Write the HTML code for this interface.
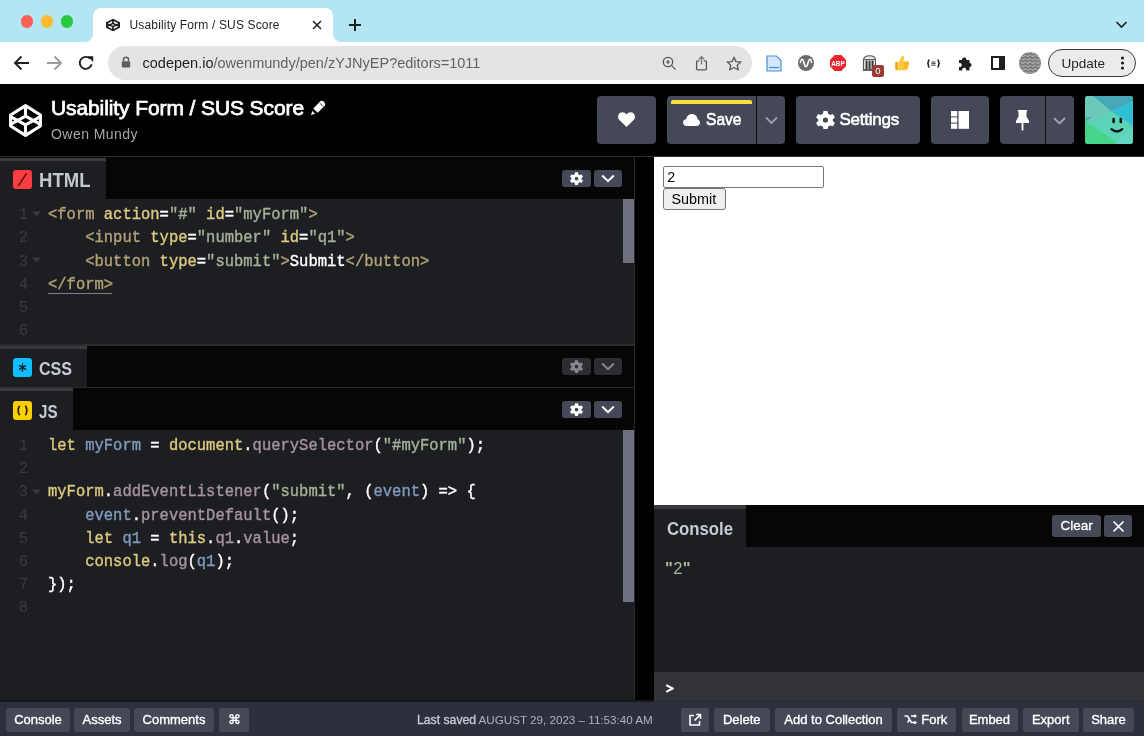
<!DOCTYPE html>
<html><head><meta charset="utf-8">
<style>
*{box-sizing:border-box;margin:0;padding:0}
html,body{width:1144px;height:736px;overflow:hidden;background:#000;font-family:"Liberation Sans",sans-serif}
div,svg,span.a{position:absolute}
span{position:static}
.btn{background:#444857;border-radius:4px}
.code{font-family:"Liberation Mono",monospace;font-size:17.4px;white-space:pre;color:#fff;line-height:23px;transform:scaleX(0.891);transform-origin:0 0;-webkit-text-stroke:0.4px currentColor}
.ln{color:#383a40;font-family:"Liberation Mono",monospace;font-size:17.4px;line-height:23px;text-align:right;width:31.6px;left:0;transform:scaleX(0.891);transform-origin:0 0}
.tg{color:#b3a276}.at{color:#ddca7e}.st{color:#a3b398}.df{color:#809bbd}.pr{color:#a8939f}.kw{color:#ddca7e}
.fbtn{background:#444857;border-radius:3px;color:#fff;font-size:13px;height:24px;top:708px;line-height:24px;text-align:center;-webkit-text-stroke:0.35px #fff}
</style></head><body><div id="root" style="left:0;top:0;width:1144px;height:736px;overflow:hidden;will-change:transform;background:#000">
<!-- ========== chrome tab bar ========== -->
<div id="tabbar" style="left:0;top:0;width:1144px;height:42px;background:#b3e6f2"></div>
<div style="left:20.5px;top:15px;width:12.5px;height:12.5px;border-radius:50%;background:#fe5f57"></div>
<div style="left:40.5px;top:15px;width:12.5px;height:12.5px;border-radius:50%;background:#febc2e"></div>
<div style="left:60.5px;top:15px;width:12.5px;height:12.5px;border-radius:50%;background:#28c840"></div>
<div style="left:93px;top:8px;width:240px;height:34px;background:#fff;border-radius:8px 8px 0 0"></div>
<div style="left:85px;top:34px;width:8px;height:8px;background:radial-gradient(circle at 0 0,#b3e6f2 7.5px,#fff 8.2px)"></div>
<div style="left:333px;top:34px;width:8px;height:8px;background:radial-gradient(circle at 100% 0,#b3e6f2 7.5px,#fff 8.2px)"></div>
<svg style="left:106px;top:19px" width="14" height="12" viewBox="0 0 33 33" preserveAspectRatio="none"><g fill="none" stroke="#1f1f1f" stroke-width="4.2" stroke-linejoin="round"><path d="M16.5 1.6L31.4 11V22L16.5 31.4L1.6 22V11Z"/><path d="M16.5 1.6V12.2L1.6 20.4M16.5 12.2L31.4 20.4M16.5 31.4V20.8L1.6 12.6M16.5 20.8L31.4 12.6"/></g></svg>
<div id="tabtitle" style="left:129.5px;top:18px;font-size:12px;color:#1f1f1f;letter-spacing:0.16px">Usability Form / SUS Score</div>
<svg style="left:312px;top:20px" width="10" height="10" viewBox="0 0 10 10"><path d="M1 1L9 9M9 1L1 9" stroke="#1f1f1f" stroke-width="1.5"/></svg>
<svg style="left:348px;top:18px" width="14" height="14" viewBox="0 0 14 14"><path d="M7 1V13M1 7H13" stroke="#1f1f1f" stroke-width="2"/></svg>
<svg style="left:1115px;top:20px" width="13" height="9" viewBox="0 0 13 9"><path d="M1.5 2L6.5 7L11.5 2" fill="none" stroke="#1f1f1f" stroke-width="1.6"/></svg>
<!-- ========== toolbar ========== -->
<div id="toolbar" style="left:0;top:42px;width:1144px;height:42px;background:#fff"></div>
<svg style="left:13px;top:55px" width="17" height="16" viewBox="0 0 17 16"><path d="M16 8H2.5M8.5 1.5L2 8L8.5 14.5" fill="none" stroke="#1f1f1f" stroke-width="1.9"/></svg>
<svg style="left:46px;top:55px" width="17" height="16" viewBox="0 0 17 16"><path d="M1 8H14.5M8.5 1.5L15 8L8.5 14.5" fill="none" stroke="#9a9a9a" stroke-width="1.9"/></svg>
<svg style="left:78px;top:55px" width="17" height="16" viewBox="0 0 17 16"><path d="M13.6 9.2A6 6 0 1 1 12 3.6" fill="none" stroke="#1f1f1f" stroke-width="1.9"/><path d="M9.5 1.2H15.2V6.9Z" fill="#1f1f1f"/></svg>
<div style="left:108px;top:46px;width:644px;height:34px;border-radius:17px;background:#e4e4e4"></div>
<svg style="left:121px;top:56px" width="10" height="12" viewBox="0 0 10 12"><path d="M2.5 5.5V3.8A2.5 2.5 0 0 1 7.5 3.8V5.5" fill="none" stroke="#5f5f5f" stroke-width="1.5"/><rect x="0.8" y="5.2" width="8.4" height="6.3" rx="1" fill="#5f5f5f"/></svg>
<div id="url" style="left:142.5px;top:55px;font-size:14.5px;color:#1f1f1f">codepen.io<span style="color:#5f6368">/owenmundy/pen/zYJNyEP?editors=1011</span></div>
<svg style="left:662px;top:56px" width="15" height="15" viewBox="0 0 15 15"><circle cx="6" cy="6" r="4.7" fill="none" stroke="#555" stroke-width="1.3"/><path d="M6 4V8M4 6H8M9.4 9.4L13.6 13.6" stroke="#555" stroke-width="1.2"/></svg>
<svg style="left:695px;top:55px" width="13" height="16" viewBox="0 0 13 16"><path d="M4.2 5.8H2.6Q1.6 5.8 1.6 6.8V13.8Q1.6 14.8 2.6 14.8H10.4Q11.4 14.8 11.4 13.8V6.8Q11.4 5.8 10.4 5.8H8.8" fill="none" stroke="#555" stroke-width="1.3"/><path d="M6.5 9.5V1.8M4 4.2L6.5 1.6L9 4.2" fill="none" stroke="#777" stroke-width="1.3"/></svg>
<svg style="left:726px;top:56px" width="16" height="15" viewBox="0 0 16 15"><path d="M8 1.2L10 5.6L14.8 6L11.2 9.2L12.3 14L8 11.5L3.7 14L4.8 9.2L1.2 6L6 5.6Z" fill="none" stroke="#5f5f5f" stroke-width="1.4" stroke-linejoin="round"/></svg>
<!-- extensions -->
<svg style="left:766px;top:55px" width="16" height="17" viewBox="0 0 16 17"><path d="M1 1H10.5L15 5.5V16H1Z" fill="#d4e6fa" stroke="#4a8fdb" stroke-width="1.2"/><path d="M3 12.5H13" stroke="#4a8fdb" stroke-width="1.2"/></svg>
<svg style="left:798px;top:55px" width="16" height="16" viewBox="0 0 16 16"><circle cx="8" cy="8" r="8" fill="#6b6b6b"/><path d="M2.2 8C3.5 3 4.7 3 6 8S8.5 13 10 8S12.5 3 13.8 8" fill="none" stroke="#fff" stroke-width="1.6"/></svg>
<svg style="left:830px;top:55px" width="16" height="16" viewBox="0 0 16 16"><path d="M4.7 0H11.3L16 4.7V11.3L11.3 16H4.7L0 11.3V4.7Z" fill="#e8262d"/><text x="8" y="10.6" font-family="Liberation Sans" font-weight="bold" font-size="6.4" fill="#fff" text-anchor="middle">ABP</text></svg>
<svg style="left:862px;top:55px" width="15" height="16" viewBox="0 0 15 16"><path d="M1.5 5.2Q1.5 0.8 7.5 0.8Q13.5 0.8 13.5 5.2V14.8H1.5Z" fill="#e6e6e6" stroke="#555" stroke-width="1.1"/><path d="M1.5 4.6H13.5" stroke="#555" stroke-width="1"/><rect x="3.6" y="5.6" width="1.9" height="8.4" fill="#333"/><rect x="6.6" y="5.6" width="1.9" height="8.4" fill="#333"/><rect x="9.6" y="5.6" width="1.9" height="8.4" fill="#333"/><rect x="0.8" y="14.2" width="13.4" height="1.6" fill="#555"/></svg>
<div style="left:872px;top:65px;width:12px;height:12px;background:#9c3a35;border-radius:2px;color:#fff;font-size:9.5px;line-height:12px;text-align:center;font-weight:normal">0</div>
<svg style="left:894px;top:55px" width="16" height="16" viewBox="0 0 16 16"><path d="M1.2 8.2Q1.2 7 2.4 7H4.2V15.2H2.4Q1.2 15.2 1.2 14Z" fill="#f2a81d"/><path d="M4.6 7.2L7.3 2.4Q7.9 0.6 9.2 1Q10.4 1.5 10 3.4L9.3 6.2H13.6Q15.4 6.3 15 8Q15.6 8.8 14.8 9.8Q15.3 10.8 14.4 11.6Q14.7 12.6 13.8 13.2Q13.9 15.2 11.8 15.2H4.6Z" fill="#fcc835"/><path d="M9.8 8.2H14.6M9.8 10.4H14.2M9.8 12.4H13.7" stroke="#e2a317" stroke-width="0.7"/></svg>
<svg style="left:926px;top:59px" width="15" height="9" viewBox="0 0 15 9"><path d="M3.6 0.9C2.2 0.9 2.4 2 2.4 3C2.4 3.9 2 4.5 1.1 4.5C2 4.5 2.4 5.1 2.4 6C2.4 7 2.2 8.1 3.6 8.1M11.4 0.9C12.8 0.9 12.6 2 12.6 3C12.6 3.9 13 4.5 13.9 4.5C13 4.5 12.6 5.1 12.6 6C12.6 7 12.8 8.1 11.4 8.1" fill="none" stroke="#1f1f1f" stroke-width="1.5"/><path d="M5.4 3H9.6M5.4 4.6H9.6M5.4 6.2H9.6" stroke="#333" stroke-width="0.9"/></svg>
<svg style="left:958px;top:56px" width="16" height="15" viewBox="0 0 16 15"><path d="M1 4H4.2A2.1 2.1 0 1 1 8.3 4H11.5V7A2.1 2.1 0 1 1 11.5 11.2V14.5H8.2A2.1 2.1 0 1 0 4.2 14.5H1V11A2.1 2.1 0 1 0 1 7Z" fill="#1f1f1f"/></svg>
<svg style="left:991px;top:56px" width="14" height="14" viewBox="0 0 14 14"><rect x="1" y="1" width="12" height="12" fill="none" stroke="#1f1f1f" stroke-width="2"/><rect x="8" y="1" width="5" height="12" fill="#1f1f1f"/></svg>
<svg style="left:1019px;top:52px" width="22" height="22" viewBox="0 0 22 22"><defs><pattern id="stp" width="5" height="3.4" patternUnits="userSpaceOnUse"><rect width="5" height="3.4" fill="#a6a6a6"/><path d="M0 2.2Q1.25 0.8 2.5 2.2T5 2.2" stroke="#707070" stroke-width="1.5" fill="none"/></pattern></defs><circle cx="11" cy="11" r="11" fill="url(#stp)"/></svg>
<div style="left:1048px;top:49px;width:88px;height:28px;border-radius:14px;border:1px solid #3a3a3a;background:#ececec"></div>
<div id="upd" style="left:1061.5px;top:56px;font-size:13.5px;color:#1f1f1f">Update</div>
<svg style="left:1120px;top:56px" width="5" height="14" viewBox="0 0 5 14"><circle cx="2.5" cy="2" r="1.6" fill="#1f1f1f"/><circle cx="2.5" cy="7" r="1.6" fill="#1f1f1f"/><circle cx="2.5" cy="12" r="1.6" fill="#1f1f1f"/></svg>
<!-- ========== codepen header ========== -->
<div id="cphead" style="left:0;top:84px;width:1144px;height:72px;background:#000"></div>
<svg style="left:9px;top:104px" width="33" height="33" viewBox="0 0 33 33"><g fill="none" stroke="#fff" stroke-width="3.1" stroke-linejoin="round"><path d="M16.5 1.6L31.4 11V22L16.5 31.4L1.6 22V11Z"/><path d="M16.5 1.6V12.2L1.6 20.4M16.5 12.2L31.4 20.4M16.5 31.4V20.8L1.6 12.6M16.5 20.8L31.4 12.6"/></g></svg>
<div id="title" style="left:51px;top:96px;font-size:21px;color:#fff;-webkit-text-stroke:0.75px #fff;letter-spacing:-0.1px">Usability Form / SUS Score</div>
<svg style="left:310px;top:100px" width="17" height="17" viewBox="0 0 17 17"><path d="M3.3 8.4L10.6 1.1Q12.4 0.2 14.1 1.9Q15.8 3.6 15 5.5L7.7 12.8Z" fill="#fff"/><path d="M1 15.1L2.3 11.1L5.1 13.8Z" fill="#fff"/><path d="M9.9 3.2L13.2 6.5" stroke="#000" stroke-width="0.9"/></svg>
<div id="owner" style="left:51px;top:126px;font-size:14px;color:#a3a6ad;letter-spacing:0.45px">Owen Mundy</div>
<div class="btn" style="left:597px;top:96px;width:59px;height:48px"></div>
<svg style="left:618px;top:112px" width="17" height="15" viewBox="0 0 17 15"><path d="M8.5 15L1.6 8.2C-0.6 6 -0.3 2.3 2.2 0.8C4.4 -0.4 6.9 0.4 8.5 2.4C10.1 0.4 12.6 -0.4 14.8 0.8C17.3 2.3 17.6 6 15.4 8.2Z" fill="#fff"/></svg>
<div class="btn" style="left:667px;top:96px;width:118px;height:48px"></div>
<div style="left:671px;top:100px;width:81px;height:4px;background:#ffdd40;border-radius:2px 2px 0 0"></div>
<div style="left:756px;top:96px;width:1px;height:48px;background:#0c0c10"></div>
<svg style="left:683px;top:113px" width="17" height="13" viewBox="0 0 17 13"><path d="M3.6 13C1.6 13 0 11.5 0 9.6C0 7.8 1.4 6.4 3.2 6.3C3.6 3.2 6 1 9 1C12 1 14.4 3.3 14.6 6.3C16 6.8 17 8.1 17 9.7C17 11.5 15.5 13 13.6 13Z" fill="#fff"/></svg>
<div id="save" style="left:705.5px;top:110px;font-size:17px;color:#fff;-webkit-text-stroke:0.6px #fff;transform:scaleX(0.915);transform-origin:0 0">Save</div>
<svg style="left:765px;top:116px" width="13" height="9" viewBox="0 0 13 9"><path d="M1 1.5L6.5 7L12 1.5" fill="none" stroke="#9ea3b4" stroke-width="1.8"/></svg>
<div class="btn" style="left:796px;top:96px;width:124px;height:48px"></div>
<svg style="left:816px;top:111px" width="19" height="18" viewBox="0 0 19 18"><g transform="translate(9.5 9)"><path d="M-2 -9H2L2.6 -6.3L4.8 -5.1L7.4 -6L9.4 -2.6L7.3 -0.8V1.1L9.4 2.9L7.4 6.3L4.8 5.4L2.6 6.6L2 9.3H-2L-2.6 6.6L-4.8 5.4L-7.4 6.3L-9.4 2.9L-7.3 1.1V-0.8L-9.4 -2.6L-7.4 -6L-4.8 -5.1L-2.6 -6.3Z" fill="#fff"/><circle r="2.6" fill="#444857"/></g></svg>
<div id="settings" style="left:839.5px;top:110px;font-size:17px;color:#fff;-webkit-text-stroke:0.6px #fff;letter-spacing:-0.25px">Settings</div>
<div class="btn" style="left:931px;top:96px;width:58px;height:48px"></div>
<svg style="left:950px;top:110px" width="20" height="19" viewBox="0 0 20 19"><rect x="1" y="1" width="6.2" height="5.4" fill="#fff"/><rect x="1" y="7.4" width="6.2" height="5.2" fill="#fff"/><rect x="1" y="13.6" width="6.2" height="5.2" fill="#fff"/><rect x="8.5" y="1" width="10.5" height="17.8" fill="#fff"/></svg>
<div class="btn" style="left:1000px;top:96px;width:74px;height:48px"></div>
<div style="left:1045px;top:96px;width:1px;height:48px;background:#0c0c10"></div>
<svg style="left:1015px;top:109px" width="15" height="22" viewBox="0 0 15 22"><path d="M2.5 1H12.5L11.5 3V7.5L14 12V14H1V12L3.5 7.5V3Z" fill="#fff"/><rect x="6.6" y="14" width="1.8" height="7.5" fill="#fff"/></svg>
<svg style="left:1053px;top:117px" width="13" height="8" viewBox="0 0 13 8"><path d="M1 1L6.5 6.5L12 1" fill="none" stroke="#9ea3b4" stroke-width="1.8"/></svg>
<svg style="left:1085px;top:96px" width="48" height="48" viewBox="0 0 48 48"><defs><clipPath id="avc"><rect width="48" height="48" rx="3"/></clipPath></defs><g clip-path="url(#avc)"><rect width="48" height="48" fill="#5bd3b6"/><path d="M0 0H48V30L26 15Z" fill="#32bfd6"/><path d="M8 0H48V5L26 15Z" fill="#46a8b6"/><path d="M0 0H8L26 15L4 26L0 24Z" fill="#6ec8ba"/><path d="M0 22L8 20L0 26Z" fill="#4ab0a0"/><path d="M0 25L35 48H0Z" fill="#48d48a"/><path d="M30 48L48 30V48Z" fill="#62d6c0"/></g><rect x="27.3" y="21.8" width="2.6" height="5.4" rx="1.3" fill="#111"/><rect x="34.5" y="21.8" width="2.6" height="5.4" rx="1.3" fill="#111"/><path d="M26.5 33.2Q32 37.8 37.2 33.2" fill="none" stroke="#111" stroke-width="2.4" stroke-linecap="round"/></svg>
<!-- ========== main ========== -->
<div style="left:0;top:156px;width:1144px;height:1px;background:#2b2c30"></div>
<div style="left:0;top:157px;width:634px;height:545px;background:#060606"></div>
<!-- html panel -->
<div style="left:0;top:158px;width:106px;height:41px;background:#1d1e22;border-top:3px solid #393a40"></div>
<div style="left:13px;top:170px;width:19px;height:19px;background:#ff3c41;border-radius:3px"></div>
<svg style="left:13px;top:170px" width="19" height="19" viewBox="0 0 19 19"><path d="M5.2 16L13.6 3.4" stroke="#2a0a0a" stroke-width="1.2"/></svg>
<div id="htmllbl" style="left:38.5px;top:168.6px;font-size:19.5px;font-weight:bold;color:#c6c8d0;transform:scaleX(0.95);transform-origin:0 0">HTML</div>
<div class="btn" style="left:562px;top:170px;width:29px;height:17px;border-radius:3px"></div>
<div class="btn" style="left:594px;top:170px;width:28px;height:17px;border-radius:3px"></div>
<svg class="gear" style="left:570px;top:172px" width="13" height="13" viewBox="-6.5 -6.5 13 13"><path d="M-1.4 -6.2H1.4L1.8 -4.3L3.3 -3.5L5.1 -4.1L6.5 -1.7L5 -0.5V0.8L6.5 2L5.1 4.4L3.3 3.8L1.8 4.6L1.4 6.5H-1.4L-1.8 4.6L-3.3 3.8L-5.1 4.4L-6.5 2L-5 0.8V-0.5L-6.5 -1.7L-5.1 -4.1L-3.3 -3.5L-1.8 -4.3Z" fill="#fff"/><circle r="1.8" cy="0.15" fill="#444857"/></svg>
<svg style="left:601px;top:174px" width="14" height="9" viewBox="0 0 14 9"><path d="M1.2 1.5L7 7.2L12.8 1.5" fill="none" stroke="#fff" stroke-width="2"/></svg>
<div style="left:0;top:199px;width:634px;height:145px;background:#1d1e22"></div>
<div style="left:623px;top:199px;width:11px;height:64px;background:#6e7180"></div>

<div class="ln" style="top:203.30px">1</div>
<div class="code" style="left:48px;top:203.30px"><span class="tg">&lt;form</span> <span class="at">action</span>=<span class="st">"#"</span> <span class="at">id</span>=<span class="st">"myForm"</span><span class="tg">&gt;</span></div>
<div class="ln" style="top:226.40px">2</div>
<div class="code" style="left:48px;top:226.40px">    <span class="tg">&lt;input</span> <span class="at">type</span>=<span class="st">"number"</span> <span class="at">id</span>=<span class="st">"q1"</span><span class="tg">&gt;</span></div>
<div class="ln" style="top:249.50px">3</div>
<div class="code" style="left:48px;top:249.50px">    <span class="tg">&lt;button</span> <span class="at">type</span>=<span class="st">"submit"</span><span class="tg">&gt;</span>Submit<span class="tg">&lt;/button&gt;</span></div>
<div class="ln" style="top:272.60px">4</div>
<div class="code" style="left:48px;top:272.60px"><span class="tg">&lt;/form&gt;</span></div>
<div class="ln" style="top:295.70px">5</div>
<div class="ln" style="top:318.80px">6</div>
<svg style="left:32px;top:211px" width="9" height="6" viewBox="0 0 9 6"><path d="M0.5 0.5H8.5L4.5 5.5Z" fill="#393b41"/></svg>
<svg style="left:32px;top:257px" width="9" height="6" viewBox="0 0 9 6"><path d="M0.5 0.5H8.5L4.5 5.5Z" fill="#393b41"/></svg>
<div style="left:48px;top:293px;width:64px;height:1px;background:#7b7e88"></div>
<!-- css panel -->
<div style="left:0;top:344px;width:634px;height:2px;background:#2a2b30"></div>
<div style="left:0;top:346px;width:87px;height:41px;background:#1d1e22;border-top:3px solid #393a40"></div>
<div style="left:13px;top:358px;width:19px;height:19px;background:#0ebeff;border-radius:3px"></div>
<svg style="left:13px;top:358px" width="19" height="19" viewBox="0 0 19 19"><path d="M9.5 5.3V13.7M5.9 7.4L13.1 11.6M13.1 7.4L5.9 11.6" stroke="#0b2533" stroke-width="1.4"/></svg>
<div id="csslbl" style="left:38.5px;top:358px;font-size:18.5px;font-weight:bold;color:#c8cad3;transform:scaleX(0.87);transform-origin:0 0">CSS</div>
<div style="left:562px;top:358px;width:29px;height:17px;border-radius:3px;background:#2c2d33"></div>
<div style="left:594px;top:358px;width:28px;height:17px;border-radius:3px;background:#2c2d33"></div>
<svg class="gear" style="left:570px;top:360px" width="13" height="13" viewBox="-6.5 -6.5 13 13"><path d="M-1.4 -6.2H1.4L1.8 -4.3L3.3 -3.5L5.1 -4.1L6.5 -1.7L5 -0.5V0.8L6.5 2L5.1 4.4L3.3 3.8L1.8 4.6L1.4 6.5H-1.4L-1.8 4.6L-3.3 3.8L-5.1 4.4L-6.5 2L-5 0.8V-0.5L-6.5 -1.7L-5.1 -4.1L-3.3 -3.5L-1.8 -4.3Z" fill="#85878f"/><circle r="1.8" cy="0.15" fill="#2c2d33"/></svg>
<svg style="left:601px;top:362px" width="14" height="9" viewBox="0 0 14 9"><path d="M1.2 1.5L7 7.2L12.8 1.5" fill="none" stroke="#85878f" stroke-width="2"/></svg>
<!-- js panel -->
<div style="left:0;top:387px;width:634px;height:1px;background:#2a2b30"></div>
<div style="left:0;top:388px;width:73px;height:42px;background:#1d1e22;border-top:3px solid #393a40"></div>
<div style="left:13px;top:401px;width:19px;height:19px;background:#fcd000;border-radius:3px"></div>
<svg style="left:13px;top:401px" width="19" height="19" viewBox="0 0 19 19"><path d="M6.6 4.8Q3.6 9.5 6.6 14.2M12.4 4.8Q15.4 9.5 12.4 14.2" fill="none" stroke="#2a2200" stroke-width="1.7"/></svg>
<div id="jslbl" style="left:38.5px;top:401px;font-size:18.5px;font-weight:bold;color:#c8cad3;transform:scaleX(0.82);transform-origin:0 0">JS</div>
<div class="btn" style="left:562px;top:401px;width:29px;height:17px;border-radius:3px"></div>
<div class="btn" style="left:594px;top:401px;width:28px;height:17px;border-radius:3px"></div>
<svg class="gear" style="left:570px;top:403px" width="13" height="13" viewBox="-6.5 -6.5 13 13"><path d="M-1.4 -6.2H1.4L1.8 -4.3L3.3 -3.5L5.1 -4.1L6.5 -1.7L5 -0.5V0.8L6.5 2L5.1 4.4L3.3 3.8L1.8 4.6L1.4 6.5H-1.4L-1.8 4.6L-3.3 3.8L-5.1 4.4L-6.5 2L-5 0.8V-0.5L-6.5 -1.7L-5.1 -4.1L-3.3 -3.5L-1.8 -4.3Z" fill="#fff"/><circle r="1.8" cy="0.15" fill="#444857"/></svg>
<svg style="left:601px;top:405px" width="14" height="9" viewBox="0 0 14 9"><path d="M1.2 1.5L7 7.2L12.8 1.5" fill="none" stroke="#fff" stroke-width="2"/></svg>
<div style="left:0;top:430px;width:634px;height:270px;background:#1d1e22"></div>
<div style="left:623px;top:430px;width:11px;height:172px;background:#6e7180"></div>

<div class="ln" style="top:434.30px">1</div>
<div class="code" style="left:48px;top:434.30px"><span class="kw">let</span> <span class="df">myForm</span> = <span class="kw">document</span>.<span class="pr">querySelector</span>(<span class="st">"#myForm"</span>);</div>
<div class="ln" style="top:457.37px">2</div>
<div class="ln" style="top:480.44px">3</div>
<div class="code" style="left:48px;top:480.44px"><span class="kw">myForm</span>.<span class="pr">addEventListener</span>(<span class="st">"submit"</span>, (<span class="df">event</span>) => {</div>
<div class="ln" style="top:503.51px">4</div>
<div class="code" style="left:48px;top:503.51px">    <span class="df">event</span>.<span class="pr">preventDefault</span>();</div>
<div class="ln" style="top:526.58px">5</div>
<div class="code" style="left:48px;top:526.58px">    <span class="kw">let</span> <span class="df">q1</span> = <span class="kw">this</span>.<span class="pr">q1</span>.<span class="pr">value</span>;</div>
<div class="ln" style="top:549.65px">6</div>
<div class="code" style="left:48px;top:549.65px">    <span class="kw">console</span>.<span class="pr">log</span>(<span class="df">q1</span>);</div>
<div class="ln" style="top:572.72px">7</div>
<div class="code" style="left:48px;top:572.72px">});</div>
<div class="ln" style="top:595.79px">8</div>
<svg style="left:32px;top:489px" width="9" height="6" viewBox="0 0 9 6"><path d="M0.5 0.5H8.5L4.5 5.5Z" fill="#393b41"/></svg>
<!-- preview -->
<div style="left:634px;top:157px;width:1px;height:545px;background:#26272b"></div>
<div style="left:654px;top:157px;width:490px;height:348px;background:#fff"></div>
<div style="left:663px;top:166px;width:160.5px;height:21.5px;border:1px solid #767676;border-radius:2px;background:#fff"></div>
<div id="two" style="left:667.3px;top:168.6px;font-size:14.3px;color:#000">2</div>
<div style="left:663px;top:188px;width:62.5px;height:21.5px;border:1px solid #767676;border-radius:3px;background:#efefef"></div>
<div id="submit" style="left:671.5px;top:190.5px;font-size:14.4px;color:#000">Submit</div>
<!-- console -->
<div style="left:654px;top:505px;width:490px;height:42px;background:#060606"></div>
<div style="left:654px;top:505px;width:92px;height:42px;background:#1d1e22;border-top:4px solid #393a40"></div>
<div id="conlbl" style="left:666.5px;top:518px;font-size:19px;font-weight:bold;color:#c8cad3;transform:scaleX(0.881);transform-origin:0 0">Console</div>
<div class="btn" style="left:1052px;top:515px;width:49px;height:22px;border-radius:3px"></div>
<div id="clear" style="left:1060.5px;top:517.5px;font-size:13.5px;color:#fff;-webkit-text-stroke:0.3px #fff">Clear</div>
<div class="btn" style="left:1104px;top:515px;width:28px;height:22px;border-radius:3px"></div>
<svg style="left:1112px;top:520px" width="13" height="13" viewBox="0 0 13 13"><path d="M1.5 1.5L11.5 11.5M11.5 1.5L1.5 11.5" stroke="#fff" stroke-width="1.7"/></svg>
<div style="left:654px;top:547px;width:490px;height:125px;background:#1d1e22"></div>
<div id="out" style="left:665px;top:558.5px;font-size:16.5px;color:#a9b99f;letter-spacing:0.4px"><b>"</b>2<b>"</b></div>
<div style="left:654px;top:672px;width:490px;height:30px;background:#323338"></div>
<svg style="left:665px;top:684px" width="9" height="9" viewBox="0 0 9 9"><path d="M1.2 1.2L7.6 4.5L1.2 7.8" fill="none" stroke="#fff" stroke-width="2"/></svg>
<!-- footer -->
<div style="left:0;top:700px;width:654px;height:2px;background:#17181c"></div>
<div style="left:654px;top:701px;width:490px;height:1px;background:#2a2b30"></div>
<div style="left:0;top:702px;width:1144px;height:34px;background:#2c303a"></div>
<div class="fbtn" style="left:6px;width:64px">Console</div>
<div class="fbtn" style="left:74px;width:56px">Assets</div>
<div class="fbtn" style="left:134px;width:80px">Comments</div>
<div class="fbtn" style="left:219px;width:30px">&#8984;</div>
<div id="ls1" style="left:416.5px;top:712.3px;font-size:13.5px;color:#c8cad3;-webkit-text-stroke:0.35px #c8cad3;white-space:nowrap;transform:scaleX(0.905);transform-origin:0 0">Last saved</div><div id="ls2" style="left:478.5px;top:712.5px;font-size:11.65px;color:#b0b3bd;white-space:nowrap">AUGUST 29, 2023 &#8211; 11:53:40 AM</div>
<div class="fbtn" style="left:681px;width:28px"></div>
<svg style="left:688px;top:713px" width="14" height="14" viewBox="0 0 14 14"><path d="M6 2.5H2V12H11.5V8" fill="none" stroke="#fff" stroke-width="1.6"/><path d="M6.5 7.5L12 2M8.2 1.5H12.5V5.8" fill="none" stroke="#fff" stroke-width="1.6"/></svg>
<div class="fbtn" style="left:714px;width:55.5px">Delete</div>
<div class="fbtn" style="left:775px;width:117px">Add to Collection</div>
<div class="fbtn" style="left:897px;width:58.5px;padding-left:16px">Fork</div>
<svg style="left:904px;top:714px" width="13" height="11" viewBox="0 0 13 11"><path d="M0.5 2H3.5L7.5 8.5H11M7 2H11M3.6 8.5L5.2 6" fill="none" stroke="#fff" stroke-width="1.5"/><circle cx="11" cy="2" r="1.5" fill="#fff"/><circle cx="11" cy="8.5" r="1.5" fill="#fff"/></svg>
<div class="fbtn" style="left:961.5px;width:56px">Embed</div>
<div class="fbtn" style="left:1023px;width:55.5px">Export</div>
<div class="fbtn" style="left:1083px;width:51px">Share</div>
</div></body></html>
